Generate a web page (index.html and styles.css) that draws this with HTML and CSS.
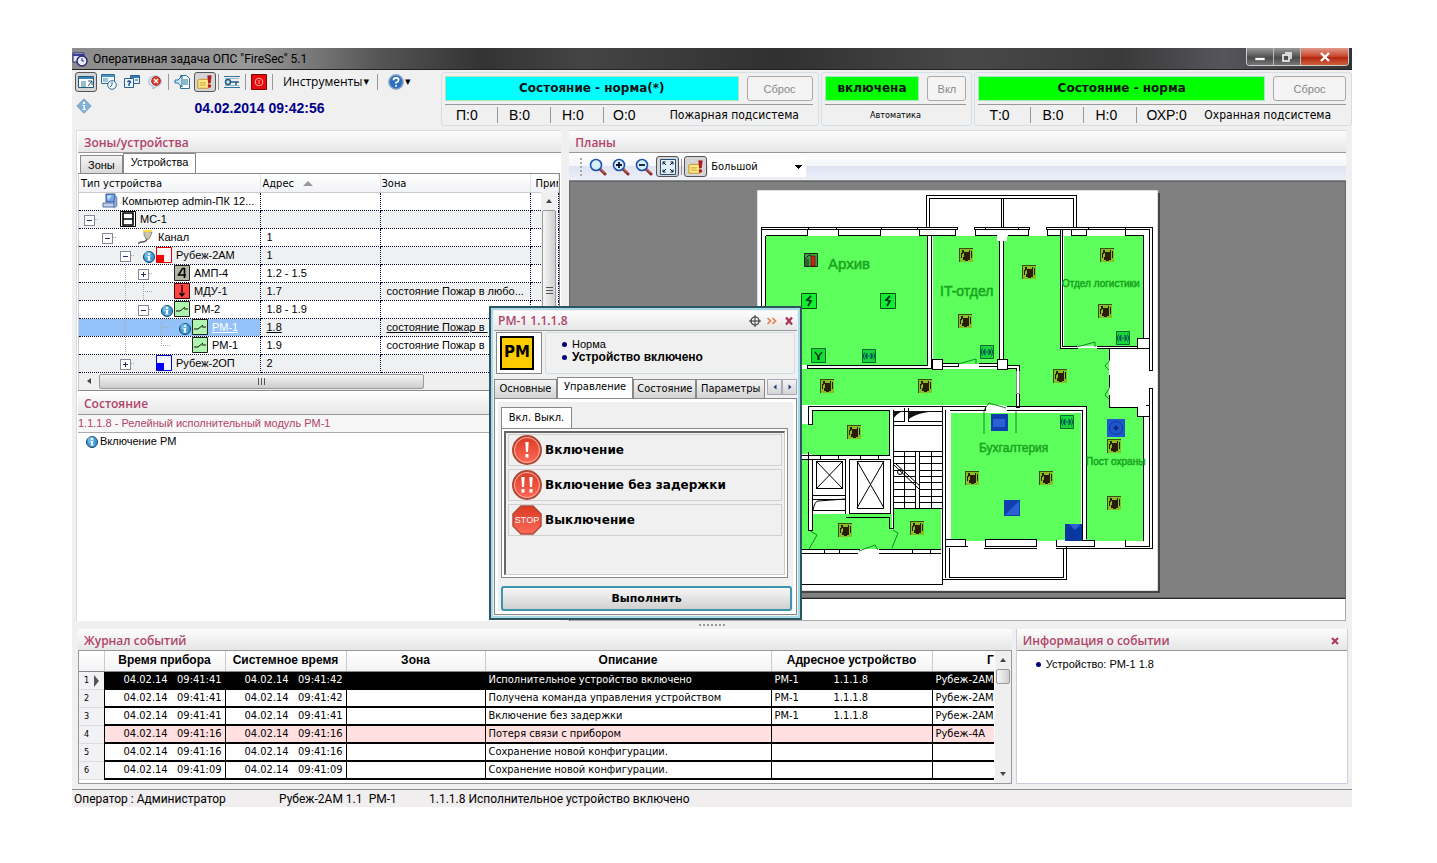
FILE: index.html
```html
<!DOCTYPE html>
<html lang="ru">
<head>
<meta charset="utf-8">
<title>Оперативная задача ОПС "FireSec" 5.1</title>
<link rel="stylesheet" href="styles.css">
</head>
<body>
<svg class="defs" aria-hidden="true">
  <defs>
    <linearGradient id="gRed" x1="0" y1="0" x2="0" y2="1"><stop offset="0" stop-color="#d93a22"/><stop offset="1" stop-color="#ff6a5a"/></linearGradient>
    <symbol id="info" viewBox="0 0 12 12"><circle cx="6" cy="6" r="5.5" fill="#3f9bd6" stroke="#14466e"/><circle cx="5" cy="4" r="3.4" fill="#8fd0f2" opacity=".6"/><path d="M5 2.3h2v1.6H5zM4.6 5h2.3v3.6h.8v1H4.3v-1h.8V6h-.5z" fill="#fff"/></symbol>
    <symbol id="relay" viewBox="0 0 16 16"><path d="M.5.5h15v15H.5z" fill="#aef5ae" stroke="#222"/><path d="M2 10h4l5-4M10 8h4" fill="none" stroke="#111"/></symbol>
    <symbol id="note" viewBox="0 0 18 16"><path d="M1 6l2-1h10v10H1z" fill="#ffe98a" stroke="#c08a1c"/><path d="M3 9h7M3 11.500h7" stroke="#c9962e"/><path d="M12 1h4l-1 8h-2z" fill="#c4161c" stroke="#7d0b0e" stroke-width=".6"/><circle cx="14" cy="12.500" r="2" fill="#c4161c"/></symbol>
    <symbol id="lens" viewBox="0 0 18 18"><path d="M11 11l5 5" stroke="#8c2f2c" stroke-width="3" stroke-linecap="round"/><path d="M11.500 10.800l4 4" stroke="#d98a80" stroke-width="1"/><circle cx="7" cy="7" r="5.500" fill="#d6f1fb" stroke="#1d4fae" stroke-width="1.600"/></symbol>
    <symbol id="det" viewBox="0 0 14 14"><path d="M0 0h14v14H0z" fill="#86bf22"/><path d="M0 0h14v1H1v13H0z" fill="#3a4a10"/><path d="M5 4h5v5h1v3H9v1H6v-1H4V9h1zM2 5h2v1H3v4H2zM3 2h2v3H3zM10 2h1v7h-1zM12 3h1v7h-1z" fill="#2a1c08"/></symbol>
    <symbol id="spk" viewBox="0 0 14 14"><path d="M.5.5h13v13H.5z" fill="#18d63a" stroke="#063"/><path d="M5 4v6L3 7zM9 4v6l2-3zM6 7h2" fill="#0a5b5b" stroke="#0a5b5b"/><path d="M2.500 3.500Q0 7 2.500 10.500M11.500 3.500Q14 7 11.500 10.500" fill="none" stroke="#0a5b3b"/></symbol>
    <symbol id="bolt" viewBox="0 0 16 16"><path d="M.5.5h15v15H.5z" fill="#10f030" stroke="#064d10"/><path d="M10 3L6 7l4 1-3 5" fill="none" stroke="#032" stroke-width="1.800"/></symbol>
  </defs>
</svg>

<div class="app">
  <header class="titlebar">
    <svg class="i16" viewBox="0 0 16 16"><path d="M1 2h11v9H1z" fill="#dfe2f8" stroke="#2c2c70"/><path d="M1 4h11" stroke="#3d3da0" stroke-width="2"/><circle cx="10" cy="10" r="5" fill="#e9edff" stroke="#25256b" stroke-width="1.400"/><path d="M10 7v3h2" fill="none" stroke="#25256b"/></svg>
    <h1>Оперативная задача ОПС "FireSec" 5.1</h1>
    <div class="winbtns">
      <button aria-label="Свернуть"><svg viewBox="0 0 12 10"><path d="M1 5.500h10v3H1z" fill="#fff" stroke="#444" stroke-width=".6"/></svg></button>
      <button aria-label="Развернуть"><svg viewBox="0 0 12 10"><path d="M4 1h6v6M2 3h6v6H2z" fill="none" stroke="#fff" stroke-width="1.500"/></svg></button>
      <button class="close" aria-label="Закрыть"><svg viewBox="0 0 12 10"><path d="M2 1l8 8M10 1L2 9" stroke="#fff" stroke-width="2.400"/></svg></button>
    </div>
  </header>

  <div class="top">
    <div class="tools">
      <div class="toolrow">
        <button class="tb on" aria-label="Окно"><svg viewBox="0 0 16 16"><path d="M.5 2.500h15v11H.5z" fill="#fff" stroke="#24587c"/><path d="M1 4h14" stroke="#3b86b8" stroke-width="2"/><path d="M3 8h5M3 10h5M3 12h5" stroke="#2f7d8c"/><path d="M10 7h4v4M14 7l-4 5" fill="none" stroke="#24587c"/></svg></button>
        <button class="tb" aria-label="Журнал"><svg viewBox="0 0 16 16"><path d="M.5.500h13v9H.5z" fill="#eef8ff" stroke="#2d6b93"/><path d="M1 2h12" stroke="#4a93c2" stroke-width="2"/><path d="M2 5h5M2 7h5" stroke="#4a93a2"/><circle cx="11" cy="11" r="4.300" fill="#f4fbff" stroke="#2d6b93"/><path d="M11 8v3l-2 2" fill="none" stroke="#2d6b93"/></svg></button>
        <button class="tb" aria-label="Запрос"><svg viewBox="0 0 16 16"><path d="M6.500 1.500h9v8h-9z" fill="#e1f2fc" stroke="#2a5f8f"/><path d="M7 3h8" stroke="#3979b4" stroke-width="2"/><path d="M.5 4.500h9v9h-9z" fill="#eaf6ff" stroke="#2a5f8f"/><path d="M3.500 8q1.500-2 3 0L5 10v2" fill="none" stroke="#1a3f80" stroke-width="1.300"/><path d="M11 6h3" stroke="#2a5f8f"/></svg></button>
        <button class="tb" aria-label="Сообщение"><svg viewBox="0 0 16 16"><path d="M8 2c8 0 8 10 2 10l-4 3v-3C0 12 0 2 8 2z" fill="#dce6f5" stroke="#9db4d6"/><circle cx="9" cy="7" r="4.300" fill="#e2432a" stroke="#a82413"/><path d="M7 5l4 4M11 5L7 9" stroke="#fff" stroke-width="1.300"/></svg></button>
        <i class="sep"></i>
        <button class="tb" aria-label="Звук"><svg viewBox="0 0 16 16"><path d="M6.500 1.500h6l3 3v10h-9z" fill="#f3fbff" stroke="#2d7199"/><path d="M9 6h5M9 8h5M9 10h5" stroke="#2d7199"/><path d="M1 6h3l4-4v11l-4-4H1z" fill="#c3e7f7" stroke="#2d7199"/></svg></button>
        <button class="tb on" aria-label="Тревоги"><svg viewBox="0 0 18 16"><use href="#note"/></svg></button>
        <i class="sep"></i>
        <button class="tb" aria-label="Ключ"><svg viewBox="0 0 16 16"><path d="M0 2.500h16M0 13.500h16" stroke="#36729c"/><path d="M1 4.500h14M1 11.500h14" stroke="#8fb8d0"/><circle cx="4" cy="8" r="2.500" fill="#d2e8f6" stroke="#245b86" stroke-width="1.500"/><path d="M7 8h8M12 8v3" stroke="#245b86" stroke-width="1.500"/></svg></button>
        <i class="sep"></i>
        <button class="tb" aria-label="Стоп"><svg viewBox="0 0 16 16"><path d="M.5.500h15v15H.5z" fill="#e80c0c" stroke="#7d0606"/><circle cx="8" cy="8" r="3.800" fill="none" stroke="#ffb0a8"/><path d="M8 6v4" stroke="#ffb0a8"/></svg></button>
        <i class="sep"></i>
        <button class="menu">Инструменты <small>▾</small></button>
        <i class="sep"></i>
        <button class="menu" aria-label="Справка"><svg class="i16" viewBox="0 0 16 16"><circle cx="8" cy="8" r="7.200" fill="#2f6fc0" stroke="#8ea6c8" stroke-width="1.500"/><path d="M5.500 6.200q0-2.400 2.600-2.400 2.500 0 2.500 2T8 8.500v1.300M8 11v1.700" fill="none" stroke="#fff" stroke-width="1.700"/></svg><small>▾</small></button>
      </div>
      <div class="clockrow">
        <svg class="i16" viewBox="0 0 16 16"><path d="M8 .8L15.200 8 8 15.200.8 8z" fill="#7fb2dc" stroke="#7f9cb8"/><path d="M7 4h2v2H7zM6.500 7H9v4h1v1H6.500v-1h1V8h-1z" fill="#fff"/></svg>
        <time>04.02.2014 09:42:56</time>
      </div>
    </div>
    <section class="sys fire">
      <div class="sysrow"><strong class="state cyan">Состояние - норма(*)</strong><button class="wide" disabled>Сброс</button></div>
      <div class="counts"><span>П:0</span><span>В:0</span><span>Н:0</span><span>О:0</span><b>Пожарная подсистема</b></div>
    </section>
    <section class="sys auto">
      <div class="sysrow"><strong class="state">включена</strong><button disabled>Вкл</button></div>
      <div class="counts small">Автоматика</div>
    </section>
    <section class="sys guard">
      <div class="sysrow"><strong class="state">Состояние - норма</strong><button class="wide" disabled>Сброс</button></div>
      <div class="counts"><span>Т:0</span><span>В:0</span><span>Н:0</span><span>ОХР:0</span><b>Охранная подсистема</b></div>
    </section>
  </div>

  <main class="main">
    <div class="left">
      <h2 class="head">Зоны/устройства</h2>
      <div class="tabs"><button>Зоны</button><button class="active">Устройства</button></div>
      <div class="treebox">
        <table class="tree">
          <colgroup><col class="c1"><col class="c2"><col class="c3"><col></colgroup>
          <thead><tr><th>Тип устройства</th><th>Адрес <svg class="sort" viewBox="0 0 10 5"><path d="M5 0l5 5H0z" fill="#999"/></svg></th><th>Зона</th><th>Примечание</th></tr></thead>
          <tbody>
            <tr><td><div class="node"><i class="slot"></i><svg viewBox="0 0 16 16"><path d="M4 1h9l-1 8H4z" fill="#6fa4e8" stroke="#2a4f96"/><path d="M5 2.500h5l-4 5z" fill="#c9e0fb"/><path d="M1 10h11v4H1z" fill="#c5d3ea" stroke="#4f6ea6"/><path d="M13 3l2 1v9l-3 2v-5z" fill="#8fa9d4" stroke="#4f6ea6" stroke-width=".6"/></svg>Компьютер admin-ПК 12...</div></td><td></td><td></td><td></td></tr>
            <tr><td><div class="node"><i class="g box"></i><i class="slot"></i><svg viewBox="0 0 16 16"><path d="M.5.500h15v15H.5z" fill="#fff" stroke="#000"/><path d="M3 2h10v12H3zM3 8h10" fill="none" stroke="#000" stroke-width="1.600"/></svg>МС-1</div></td><td></td><td></td><td></td></tr>
            <tr><td><div class="node"><i class="g"></i><i class="g box"></i><i class="slot"></i><svg viewBox="0 0 16 16"><path d="M6 2l8 1-1 3-2 4H8L6 6z" fill="#c9c4b4" stroke="#7d786c" stroke-width=".8"/><path d="M5 1h9v2H5z" fill="#ffd94a"/><path d="M9 10q-1 3-5 3t-3 2" fill="none" stroke="#555" stroke-width="1.400"/></svg>Канал</div></td><td>1</td><td></td><td></td></tr>
            <tr><td><div class="node"><i class="g"></i><i class="g"></i><i class="g box"></i><i class="slot"><svg class="i12" viewBox="0 0 12 12"><use href="#info"/></svg></i><svg viewBox="0 0 16 16"><path d="M.5.500h15v15H.5z" fill="#fff5f5" stroke="#d00"/><path d="M1 8h7v7H1z" fill="#f00"/></svg>Рубеж-2АМ</div></td><td>1</td><td></td><td></td></tr>
            <tr><td><div class="node"><i class="g"></i><i class="g"></i><i class="g v"></i><i class="g box plus"></i><i class="slot"></i><svg viewBox="0 0 16 16"><path d="M.5.500h15v15H.5z" fill="#b5b5a5" stroke="#222"/><path d="M10.500 13V3.500h-2L4.500 10H12" fill="none" stroke="#000" stroke-width="1.600"/></svg>АМП-4</div></td><td>1.2 - 1.5</td><td></td><td></td></tr>
            <tr><td><div class="node"><i class="g"></i><i class="g"></i><i class="g v"></i><i class="g v h"></i><i class="slot"></i><svg viewBox="0 0 16 16"><path d="M.5.500h15v15H.5z" fill="#f44" stroke="#400"/><path d="M8 2v11M5.500 10L8 13l2.500-3" fill="none" stroke="#000" stroke-width="1.200"/></svg>МДУ-1</div></td><td>1.7</td><td>состояние Пожар в любо...</td><td></td></tr>
            <tr><td><div class="node"><i class="g"></i><i class="g"></i><i class="g v"></i><i class="g box"></i><i class="slot"><svg class="i12" viewBox="0 0 12 12"><use href="#info"/></svg></i><svg viewBox="0 0 16 16"><use href="#relay"/></svg>РМ-2</div></td><td>1.8 - 1.9</td><td></td><td></td></tr>
            <tr class="sel"><td><div class="node"><i class="g"></i><i class="g"></i><i class="g v"></i><i class="g"></i><i class="g v h"></i><i class="slot"><svg class="i12" viewBox="0 0 12 12"><use href="#info"/></svg></i><svg viewBox="0 0 16 16"><use href="#relay"/></svg><u>РМ-1</u></div></td><td><u>1.8</u></td><td><u>состояние Пожар в&nbsp;</u></td><td></td></tr>
            <tr><td><div class="node"><i class="g"></i><i class="g"></i><i class="g v"></i><i class="g"></i><i class="g end h"></i><i class="slot"></i><svg viewBox="0 0 16 16"><use href="#relay"/></svg>РМ-1</div></td><td>1.9</td><td>состояние Пожар в</td><td></td></tr>
            <tr><td><div class="node"><i class="g"></i><i class="g"></i><i class="g box plus"></i><i class="slot"></i><svg viewBox="0 0 16 16"><path d="M.5.500h15v15H.5z" fill="#f5f5ff" stroke="#00c"/><path d="M1 8h7v7H1z" fill="#00f"/></svg>Рубеж-2ОП</div></td><td>2</td><td></td><td></td></tr>
          </tbody>
        </table>
        <div class="vbar treev"><svg viewBox="0 0 8 8"><path d="M4 2l3 4H1z" fill="#444"/></svg><div class="vthumb"><b></b></div></div>
        <div class="hbar"><svg viewBox="0 0 8 8"><path d="M2 4l4-3v6z" fill="#444"/></svg><div class="hthumb"><b></b></div></div>
      </div>
      <h2 class="head second">Состояние</h2>
      <p class="sub">1.1.1.8 - Релейный исполнительный модуль РМ-1</p>
      <p class="line"><svg class="i12" viewBox="0 0 12 12"><use href="#info"/></svg>Включение РМ</p>
    </div>

    <div class="right">
      <h2 class="head">Планы</h2>
      <div class="planbar">
        <i class="grip"></i>
        <button class="tb" aria-label="Лупа"><svg viewBox="0 0 18 18"><use href="#lens"/></svg></button>
        <button class="tb" aria-label="Увеличить"><svg viewBox="0 0 18 18"><use href="#lens"/><path d="M4 7h6M7 4v6" stroke="#113" stroke-width="1.800"/></svg></button>
        <button class="tb" aria-label="Уменьшить"><svg viewBox="0 0 18 18"><use href="#lens"/><path d="M4 7h6" stroke="#113" stroke-width="1.800"/></svg></button>
        <button class="tb on" aria-label="Вписать"><svg viewBox="0 0 16 16"><path d="M.5.500h15v15H.5z" fill="#dff0fb" stroke="#245078"/><path d="M6 6L3 3M10 6l3-3M6 10l-3 3M10 10l3 3M3 5.500V3h2.500M10.500 3H13v2.500M3 10.500V13h2.500M10.500 13H13v-2.500" fill="none" stroke="#111"/></svg></button>
        <i class="sep"></i>
        <button class="tb on" aria-label="Тревоги на плане"><svg viewBox="0 0 18 16"><use href="#note"/></svg></button>
        <select aria-label="План"><option>Большой</option></select>
      </div>
      <div class="canvas">
        <svg class="plan" viewBox="757 190 403 403">
          <path d="M760 193h400v400H760z" fill="#444"/>
          <path d="M757.500 190.500h400v400h-400z" fill="#fff" stroke="#ddd"/>
          <g fill="#5cff5c" shape-rendering="crispEdges">
            <path d="M766 236h162v129H766zM933 236h67v128h-67zM1004 236h57v130h-57zM1064 236h79v110h-79zM766 369h253v36H766zM1004 348h105v58h-105zM1086 405h57v136h-57zM951 413h130v128H951zM812 411h77v44h-77zM800 424h14v30h-14zM812 514h80v35h-80zM800 460h8v89h-8zM893 509h48v40h-48zM888 528h6v21h-6zM806 530h8v19h-8z"/>
          </g>
          <g fill="none" stroke="#000" shape-rendering="crispEdges">
            <path d="M926.500 227v-31.500h150V227M929.500 227v-28.500h144V227M1001.500 198v29M1003.500 198v29"/>
            <path d="M761.500 227.500h196v2h-196zM808.500 227v2M836.500 227v2M881.500 227v2M917.500 227v2M974.500 227.500h55v2h-55zM985.500 227v2M1018.500 227v2M1046.500 227.500H1152.500V370.500h-3V229.500h-103zM1088.500 227v2M1125.500 227v2"/>
            <path d="M761.500 229v175M765.500 404V235.500M765.500 235.500h42v-6M838.500 229v6.500h42v-6M919.500 229v6.500h36v-6M975.500 229v6.500h22M1008 235.500h20v-6M1047.500 229v6.500h13M1071.500 229v6.500h15v-6M1125.500 229v6.500h18V338"/>
            <path d="M927.500 236v129.500H807.500v3H931.500V236M999.500 241v118M1003.500 241v118M1060.500 230v118.500h17M1062.500 230v116.500h14M1096.500 346.500h41M1096.500 348.500h41M943 363.500h15v3h-15M979 363.500h18M979 366.500h18"/>
            <path d="M932.500 359.500h10v10h-10zM1137.500 338.500h12v10h-12zM1137.500 405.500h12v11h-12zM997.500 359.500h10v10h-10zM1007 365.500h12.500v6h-3V368H1007M1016.500 393.500h3v14h-3z" fill="#fff"/>
            <path d="M1109.500 348.500h36v59h-36z" fill="#fff" stroke="none"/><path d="M1016.500 371v22h3v-22" fill="#fff" stroke="#888"/><path d="M997 230h10v11h-10z" fill="#fff" stroke="none"/><path d="M1109.500 348v12M1109.500 375v12M1109.500 395v12.500h28M1152.500 388.500h-3v19M1152.500 388v160M1149.500 416v130M1143.500 416v124.500M1125.500 540v6.500h24M1125 548.500h27.500"/>
            <path d="M808 406.500h178M812 410.500h77M808.500 406v18h4v-13M893.500 410V509M889.500 410v45M942.500 406v173M945.500 410v168M949.500 410.500h36v-4M1007 406.500h79.500V539M1007 410.500h75.500V539.500M951 539.500h15M951 546.500h17"/>
            <path d="M800 455.500h89.500M800 459.500h12M820 455v4M838 455v4M860 455v4M878 455v4M808.500 452v78h4V459.500h33v54M849.500 459.500h41V513.500h-41zM812 495.500h33M812 499.500h33M845.500 517.500h44v11h4v-20"/>
            <path d="M816.500 461.500h26v27h-26zM857.500 461.500h26v47h-26zM812 510.500h33"/>
            <path d="M893.500 411.500h49M893.500 421.500h11v-14M908.500 408v13.500h34M893 425.500h49M893 451.500h49M893 456.500h49M893 463.500h49M893 470.500h49M893 476.500h49M893 482.500h49M893 489.500h49M893 496.500h49M893 502.500h49M893 508.500h49M904.500 451v57M931.500 451v57"/>
            <path d="M915.500 451.500h4v57h-4z" fill="#fff"/>
            <path d="M800 549.500h60M800 553.500h58M824.500 549v4M839.500 549v4M879 549.500h62M879 553.500h62M912.500 549v4M930.500 549v4M942.500 553v31.500H800M942 579.500h124V547M949.500 548v29.500h114V548"/>
            <path d="M945.500 539.500h20v7h-20M985.500 539.500h51v7h-51zM1056.500 540v6.500h38v-6.500h-13M1056 548.500h70M984 548.500h53" fill="#fff"/>
          </g>
          <g fill="none" stroke="#000" stroke-width="1">
            <path d="M816 461l27 28M843 461l-27 28M857 461l27 47M884 461l-27 47M813 510q2-9 5-9l27-2M893 464l26 25M896 464l24 22"/><circle cx="900" cy="472" r="2.500"/>
            <path d="M893 411h11q-8 2-11 9zM908 420v-9h32q-24 1-32 9z" fill="#111" stroke="none"/>
          </g>
          <g fill="none" stroke="#158a25">
            <path d="M1077 347l18-5v5M958 364l18-5v5M984 410l5-7 17 5M984 411v23M1016 411v22M1110 360l-5 6 4 4M1110 387l-5 8 4 4M810 531l7 4-8 14M859 551l16-6 3 5M893 530l5 3-6 15"/>
          </g>
          <g class="rooms">
            <text x="828" y="269" font-size="15">Архив</text>
            <text x="940" y="296" font-size="14">IT-отдел</text>
            <text x="1062" y="287" font-size="10">Отдел логистики</text>
            <text x="979" y="452" font-size="12">Бухгалтерия</text>
            <text x="1086" y="465" font-size="10">Пост охраны</text>
          </g>
          <g>
            <use href="#det" x="959" y="248" width="14" height="14"/><use href="#det" x="958" y="314" width="14" height="14"/>
            <use href="#det" x="1022" y="265" width="14" height="14"/><use href="#det" x="1100" y="248" width="14" height="14"/>
            <use href="#det" x="1098" y="304" width="14" height="14"/><use href="#det" x="1053" y="369" width="14" height="14"/>
            <use href="#det" x="820" y="379" width="14" height="14"/><use href="#det" x="918" y="379" width="14" height="14"/>
            <use href="#det" x="847" y="425" width="14" height="14"/><use href="#det" x="965" y="471" width="14" height="14"/>
            <use href="#det" x="1039" y="471" width="14" height="14"/><use href="#det" x="1107" y="439" width="14" height="14"/>
            <use href="#det" x="1107" y="496" width="14" height="14"/><use href="#det" x="838" y="523" width="14" height="14"/>
            <use href="#det" x="910" y="521" width="14" height="14"/>
            <use href="#spk" x="862" y="349" width="14" height="14"/><use href="#spk" x="980" y="345" width="14" height="14"/>
            <use href="#spk" x="1116" y="331" width="14" height="14"/><use href="#spk" x="1060" y="415" width="14" height="14"/>
            <use href="#bolt" x="801" y="293" width="16" height="16"/><use href="#bolt" x="880" y="293" width="16" height="16"/>
            <path d="M811.500 348.500h14v14h-14z" fill="#14dd30" stroke="#063"/><path d="M815 352l3 4v4M822 352l-3 4v4" fill="none" stroke="#032" stroke-width="1.300"/>
            <path d="M804.500 253.500h13v13h-13z" fill="#2fa83a" stroke="#222"/><path d="M811 256h4v10h-4z" fill="#d31f1f" stroke="#500" stroke-width=".6"/><path d="M806 266v-8q2-3 5-3M808 266v-7" fill="none" stroke="#222"/>
            <path d="M991 414h17v17h-17z" fill="#0f3fae"/><path d="M993 419h12v8h-12z" fill="#2a62d6"/>
            <path d="M1107 419h18v18h-18z" fill="#1e56cc"/><circle cx="1116" cy="428" r="6.500" fill="none" stroke="#0c3aa0"/><path d="M1116 425l3 3-3 3-3-3z" fill="#0c3080"/>
            <path d="M1004 500h16v16h-16z" fill="#0f3fae"/><path d="M1019 501v14h-14z" fill="#2a62d6"/>
            <path d="M1065 524h17v17h-17z" fill="#0a36a0"/><path d="M1069 524h12l-6 6z" fill="#2a62d6"/>
          </g>
        </svg>
      </div>
      <div class="under"></div>
    </div>
  </main>

  <div class="splitter"><i></i></div>

  <div class="bottom">
    <section class="journal">
      <h2 class="head">Журнал событий</h2>
      <div class="jbox">
        <table class="log">
          <colgroup><col class="j0"><col class="j1"><col class="j1"><col class="j3"><col class="j4"><col class="j5"><col></colgroup>
          <thead><tr><th></th><th>Время прибора</th><th>Системное время</th><th>Зона</th><th>Описание</th><th>Адресное устройство</th><th class="r">Г</th></tr></thead>
          <tbody>
            <tr class="cur"><td>1<svg viewBox="0 0 6 12"><path d="M0 0l5 6-5 6z" fill="#555"/></svg></td><td class="r">04.02.14&nbsp;&nbsp;&nbsp;09:41:41</td><td class="r">04.02.14&nbsp;&nbsp;&nbsp;09:41:42</td><td></td><td>Исполнительное устройство включено</td><td><span class="pm">РМ-1</span>1.1.1.8</td><td>Рубеж-2АМ</td></tr>
            <tr><td>2</td><td class="r">04.02.14&nbsp;&nbsp;&nbsp;09:41:41</td><td class="r">04.02.14&nbsp;&nbsp;&nbsp;09:41:42</td><td></td><td>Получена команда управления устройством</td><td><span class="pm">РМ-1</span>1.1.1.8</td><td>Рубеж-2АМ</td></tr>
            <tr><td>3</td><td class="r">04.02.14&nbsp;&nbsp;&nbsp;09:41:41</td><td class="r">04.02.14&nbsp;&nbsp;&nbsp;09:41:41</td><td></td><td>Включение без задержки</td><td><span class="pm">РМ-1</span>1.1.1.8</td><td>Рубеж-2АМ</td></tr>
            <tr class="lost"><td>4</td><td class="r">04.02.14&nbsp;&nbsp;&nbsp;09:41:16</td><td class="r">04.02.14&nbsp;&nbsp;&nbsp;09:41:16</td><td></td><td>Потеря связи с прибором</td><td></td><td>Рубеж-4А</td></tr>
            <tr><td>5</td><td class="r">04.02.14&nbsp;&nbsp;&nbsp;09:41:16</td><td class="r">04.02.14&nbsp;&nbsp;&nbsp;09:41:16</td><td></td><td>Сохранение новой конфигурации.</td><td></td><td></td></tr>
            <tr><td>6</td><td class="r">04.02.14&nbsp;&nbsp;&nbsp;09:41:09</td><td class="r">04.02.14&nbsp;&nbsp;&nbsp;09:41:09</td><td></td><td>Сохранение новой конфигурации.</td><td></td><td></td></tr>
          </tbody>
        </table>
        <div class="vbar"><svg viewBox="0 0 8 8"><path d="M4 2l3 4H1z" fill="#444"/></svg><div class="vthumb short"></div><svg class="dn" viewBox="0 0 8 8"><path d="M1 2h6L4 6z" fill="#444"/></svg></div>
      </div>
    </section>
    <section class="event">
      <h2 class="head">Информация о событии <button aria-label="Закрыть"><svg viewBox="0 0 8 8"><path d="M1 1l6 6M7 1L1 7" stroke="#b0365a" stroke-width="2"/></svg></button></h2>
      <ul class="dots"><li>Устройство: РМ-1 1.8</li></ul>
    </section>
  </div>

  <footer class="status"><span class="op">Оператор : Администратор</span><span class="dev">Рубеж-2АМ 1.1&ensp;РМ-1</span><span>1.1.1.8 Исполнительное устройство включено</span></footer>

  <div class="dialog" role="dialog" aria-label="РМ-1 1.1.1.8">
    <h2 class="head">РМ-1 1.1.1.8
      <span class="dicons">
        <svg viewBox="0 0 12 12"><circle cx="6" cy="6" r="4" fill="none" stroke="#333" stroke-width="1.200"/><path d="M6 0v12M0 6h12" stroke="#333"/></svg>
        <svg viewBox="0 0 12 12"><path d="M1.500 3l3 3-3 3M6.500 3l3 3-3 3" fill="none" stroke="#f07a4a" stroke-width="1.700"/></svg>
        <svg viewBox="0 0 12 12"><path d="M3 2.500l6 7M9 2.500l-6 7" stroke="#a82f55" stroke-width="2.200"/></svg>
      </span>
    </h2>
    <div class="summary">
      <div class="pmbox"><div class="pmicon">РМ</div></div>
      <ul class="dots"><li>Норма</li><li><b>Устройство включено</b></li></ul>
    </div>
    <div class="dtabs"><button>Основные</button><button class="active">Управление</button><button>Состояние</button><button>Параметры</button><button class="arr" aria-label="Назад"><svg viewBox="0 0 8 8"><path d="M5.500 1.500v5L2.500 4z" fill="#24368c"/></svg></button><button class="arr" aria-label="Вперёд"><svg viewBox="0 0 8 8"><path d="M2.500 1.500v5l3-2.500z" fill="#24368c"/></svg></button></div>
    <div class="dbody">
      <button class="subtab">Вкл. Выкл.</button>
      <div class="pane"><div class="list">
        <button class="cmd"><svg viewBox="0 0 30 30"><circle cx="15" cy="15" r="14" fill="url(#gRed)" stroke="#b04a38" stroke-width="2"/><circle cx="15" cy="15" r="12.500" fill="none" stroke="#ffb3a6"/><path d="M13.300 7h3.400l-.7 10h-2zM13.500 19h3v3.500h-3z" fill="#fff"/></svg>Включение</button>
        <button class="cmd"><svg viewBox="0 0 30 30"><circle cx="15" cy="15" r="14" fill="url(#gRed)" stroke="#b04a38" stroke-width="2"/><circle cx="15" cy="15" r="12.500" fill="none" stroke="#ffb3a6"/><path d="M9.300 7h3.400L12 17h-2zM9.500 19h3v3.500h-3zM17.300 7h3.400l-.7 10h-2zM17.500 19h3v3.500h-3z" fill="#fff"/></svg>Включение без задержки</button>
        <button class="cmd"><svg viewBox="0 0 30 30"><path d="M9 1h12l8 8v12l-8 8H9l-8-8V9z" fill="url(#gRed)" stroke="#b04a38" stroke-width="1.500"/><text x="15" y="18" font-size="9" text-anchor="middle" fill="#fff" class="stop">STOP</text></svg>Выключение</button>
      </div></div>
      <button class="run">Выполнить</button>
    </div>
  </div>
</div>
</body>
</html>
```
FILE: styles.css
```css
* { box-sizing: border-box; }
body {
  margin: 0;
  min-height: 100vh;
  padding: 48px 85px 56px 72px;
  display: flex;
  background: #fff;
  color: #000;
  font: 11px/14px "DejaVu Sans Condensed", "DejaVu Sans", sans-serif;
}
h1, h2, p, ul { margin: 0; padding: 0; }
button { font: inherit; color: inherit; padding: 0; background: none; border: 0; }
i { font-style: normal; display: block; }
svg { flex: none; display: block; }
.defs { position: absolute; width: 0; height: 0; }
.i16 { width: 16px; height: 16px; }
.i12 { width: 12px; height: 12px; }

.app { position: relative; flex: 1; min-width: 0; display: flex; flex-direction: column; background: #f0f0f0; }

.titlebar {
  height: 22px; display: flex; align-items: center; gap: 5px; overflow: hidden;
  background: linear-gradient(90deg, #8c8c8c, #989898 14%, #555 24%, #333 32%, #444 40%, #303030 55%, #484848 70%, #3a3a3a 82%, #55555c 90%, #333);
  border-bottom: 1px solid #222;
}
.titlebar h1 { font: 12px/20px Roboto, "Noto Sans", sans-serif; }
.winbtns { margin-left: auto; margin-right: 3px; align-self: flex-start; display: flex; height: 18px; border: 1px solid #ccc; border-top: 0; border-radius: 0 0 4px 4px; overflow: hidden; }
.winbtns button { width: 27px; display: grid; place-items: center; background: linear-gradient(#9a9a9a, #555 50%, #444 50%, #777); border-right: 1px solid #bbb; }
.winbtns .close { width: 47px; border: 0; background: linear-gradient(#e09a88, #c8452c 50%, #b0200c 50%, #d0603c); }
.winbtns svg { width: 12px; height: 10px; }

.top { display: flex; align-items: flex-start; gap: 2px; height: 60px; padding-top: 2px; }
.tools { flex: none; width: 367px; }
.toolrow { display: flex; align-items: center; height: 20px; gap: 1px; padding-left: 3px; }
.tb { width: 22px; height: 20px; display: grid; place-items: center; }
.tb svg { width: 16px; height: 16px; }
.tb.on { border: 1px solid #555; border-radius: 3px; background: #d5d5d8; }
.sep { width: 1px; height: 16px; background: #999; margin: 0 1px; flex: none; }
.menu { display: flex; align-items: center; font: 12px/18px "Open Sans", "Noto Sans", sans-serif; padding: 0 6px 0 8px; white-space: nowrap; }
.menu small { font: 11px/12px "DejaVu Sans", sans-serif; margin-left: 1px; }
.clockrow { display: flex; align-items: center; padding: 0 12px 4px 4px; height: 32px; }
.clockrow time { flex: 1; padding-top: 4px; text-align: center; font: bold 14px/18px "Liberation Sans", Arial, sans-serif; color: #00008a; }

.sys { border: 1px solid #d3dee6; border-radius: 3px; padding: 3px 5px 0 3px; display: flex; flex-direction: column; background: #f0f0f0; min-width: 0; }
.fire { flex: 381; } .auto { flex: 147; } .guard { flex: 381; }
.sysrow { display: flex; gap: 8px; height: 26px; padding-bottom: 1px; }
.sysrow .state { flex: 1; background: #0f0; border: 1px solid #a6e8c0; text-align: center; color: #111; font: bold 12px/23px "DejaVu Sans", sans-serif; white-space: nowrap; }
.sysrow .cyan { background: #0ff; }
.sysrow button { width: 39px; border: 1px solid #a9a9a9; border-radius: 3px; color: #888; background: #f4f4f4; font: 11px/20px "Liberation Sans", Arial, sans-serif; }
.sysrow .wide { width: 66px; } .guard .wide { width: 73px; }
.counts { display: flex; align-items: center; margin-top: 2px; border-top: 1px solid #999; height: 21px; }
.counts span { width: 53px; padding-left: 11px; font: 14px/16px "Liberation Sans", Arial, sans-serif; border-right: 1px solid #999; white-space: nowrap; }
.counts span:nth-child(4) { border: 0; width: 58px; padding-left: 9px; }
.counts b { flex: 1; padding-right: 6px; text-align: center; font: 12px/16px "DejaVu Sans Condensed", sans-serif; white-space: nowrap; }
.small { justify-content: center; font-size: 9px; }

.main { flex: 1; display: flex; gap: 8px; padding: 0 6px 0 4px; min-height: 0; }
.left { flex: 484; min-width: 0; background: #fff; border: 1px solid #d3dee6; border-width: 1px 0 0 1px; padding-left: 1px; }
.right { flex: 778; min-width: 0; display: flex; flex-direction: column; border-top: 1px solid #d3dee6; }
.head {
  display: flex; align-items: center; height: 22px; padding: 2px 8px 0 6px;
  font: 600 12px/18px "Open Sans", "Noto Sans", sans-serif; color: #b0446a;
  background: linear-gradient(#fdfdfd, #e6e6e6); border-bottom: 1px solid #999;
}
.tabs { display: flex; align-items: flex-end; height: 20px; padding-left: 2px; font: 11px/16px "Liberation Sans", Arial, sans-serif; }
.tabs button { height: 18px; padding: 0 7px; border: 1px solid #888; border-bottom: 0; background: linear-gradient(#f4f4f4, #d8d8d8); }
.tabs .active { height: 20px; background: #fff; padding-bottom: 3px; }
.treebox { position: relative; border: 1px solid #888; border-left-color: #ccc; margin-right: 1px; overflow: hidden; }
.tree { width: 100%; table-layout: fixed; border-collapse: collapse; font: 11px/16px "Liberation Sans", Arial, sans-serif; }
.c1 { width: 181px; } .c2 { width: 120px; } .c3 { width: 150px; }
.tree th { height: 18px; padding: 1px 0 0 2px; font: 11px/15px "DejaVu Sans Condensed", sans-serif; text-align: left; white-space: nowrap; overflow: hidden; border-right: 1px solid #e2e4ea; border-bottom: 1px solid #ccc; background: linear-gradient(#fff, #f1f2f6); }
.tree th:last-child { padding-left: 5px; }
.tree th:nth-child(3) { padding-left: 1px; }
.sort { display: inline-block; width: 10px; height: 5px; margin-left: 6px; vertical-align: middle; }
.tree td { height: 18px; padding: 0 0 0 6px; white-space: nowrap; overflow: hidden; border-bottom: 1px dotted #003; border-right: 1px dotted #003; }
.tree td:first-child { padding: 0 0 0 1px; }
.tree tr:nth-child(even) td { background: #eff0f2; }
.tree tr.sel td:first-child { background: #94c2f8; color: #fff; }
.node { display: flex; align-items: center; height: 17px; }
.node > svg { width: 16px; height: 16px; margin-right: 4px; }
.slot { width: 22px; flex: none; display: flex; justify-content: flex-end; padding: 4px 1px 0 0; }
.g { position: relative; width: 18px; height: 17px; flex: none; }
.v { background: linear-gradient(#aaa 50%, transparent 50%) 9px 0 / 1px 2px repeat-y; }
.h::after, .box::after { content: ""; position: absolute; left: 9px; top: 8px; width: 9px; border-top: 1px dotted #aaa; }
.end::before { content: ""; position: absolute; left: 9px; top: 0; height: 9px; border-left: 1px dotted #aaa; }
.box::before { content: ""; position: absolute; z-index: 1; left: 4px; top: 4px; width: 9px; height: 9px; border: 1px solid #889; background: linear-gradient(#236, #236) center / 5px 1px no-repeat #fff; }
.plus::before { background: linear-gradient(#236, #236) center / 5px 1px no-repeat, linear-gradient(#236, #236) center / 1px 5px no-repeat #fff; }

.vbar { width: 16px; flex: none; display: flex; flex-direction: column; align-items: center; background: #efefef; }
.vbar svg { width: 8px; height: 8px; margin: 5px 0; }
.vbar .dn { margin-top: auto; }
.vthumb { width: 14px; flex: 1; display: grid; place-items: center; border: 1px solid #999; border-radius: 2px; background: linear-gradient(90deg, #f7f7f7, #cfcfcf); }
.vthumb b { width: 7px; height: 8px; background: repeating-linear-gradient(#555 0 1px, transparent 1px 3px); }
.vthumb.short { flex: none; height: 15px; }
.treev { position: absolute; right: 2px; top: 18px; bottom: 17px; }
.hbar { height: 17px; display: flex; align-items: center; background: #efefef; padding: 1px 0; }
.hbar svg { width: 8px; height: 8px; margin: 0 6px; }
.hthumb { width: 325px; height: 15px; display: grid; place-items: center; border: 1px solid #999; border-radius: 2px; background: linear-gradient(#f4f4f4, #cdcdcd); }
.hthumb b { width: 8px; height: 7px; background: repeating-linear-gradient(90deg, #555 0 1px, transparent 1px 3px); }
.second { margin-top: 2px; height: 22px; }
.sub { font: 11px/17px "Liberation Sans", Arial, sans-serif; color: #b0446a; border-bottom: 1px solid #aaa; background: #f6f6f6; white-space: nowrap; }
.line { display: flex; align-items: center; gap: 2px; padding: 0 8px; font: 11px/16px "Liberation Sans", Arial, sans-serif; }
.line svg { margin-top: 2px; }

.planbar { display: flex; align-items: center; height: 28px; gap: 1px; padding-left: 11px; background: linear-gradient(#fff, #f4f5fa 50%, #dfe3f2 50%, #eef0f8); border-bottom: 1px solid #888; }
.planbar .tb svg { width: 18px; height: 18px; }
.planbar .tb.on { width: 23px; height: 21px; }
.planbar .tb.on svg { width: 16px; height: 16px; }
.grip { width: 2px; height: 18px; margin-right: 4px; background: repeating-linear-gradient(#aaa 0 2px, transparent 2px 4px); }
.planbar select { appearance: none; width: 98px; height: 21px; padding: 0 3px; border: 0; font: inherit; color: #000; background: linear-gradient(#000, #000) 87px 9px / 7px 1px no-repeat, linear-gradient(#000, #000) 88px 10px / 5px 1px no-repeat, linear-gradient(#000, #000) 89px 11px / 3px 1px no-repeat, linear-gradient(#000, #000) 90px 12px / 1px 1px no-repeat, #fff; }
.canvas { flex: 1; min-height: 0; display: flex; align-items: center; justify-content: center; padding: 3px 0 0 2px; background: #808080; border: 1px solid #666; }
.plan { width: 403px; height: 403px; }
.rooms text { font-family: "Liberation Sans", Arial, sans-serif; fill: #1aa51f; stroke: #1aa51f; stroke-width: .5; }
.under { height: 23px; background: #fff; border: 1px solid #222; border-color: #222 #aaa #aaa #222; }

.splitter { height: 8px; display: grid; place-items: center; }
.splitter i { width: 26px; height: 2px; background: repeating-linear-gradient(90deg, #999 0 2px, transparent 2px 4px); }

.bottom { display: flex; gap: 4px; padding: 0 4px 0 6px; }
.journal { flex: 936; min-width: 0; }
.event { flex: 331; min-width: 0; display: flex; flex-direction: column; background: #fff; border: 1px solid #ccd; border-top: 0; }
.event .head button { margin-left: auto; width: 8px; height: 8px; }
.event svg { width: 8px; height: 8px; }
.jbox { display: flex; height: 133px; overflow: hidden; background: #fff; border: 1px solid #999; border-top: 0; }
.log { flex: 1; min-width: 0; width: 0; table-layout: fixed; border-collapse: collapse; align-self: flex-start; margin-right: 1px; }
.j0 { width: 25px; } .j1 { width: 121px; } .j3 { width: 139px; } .j4 { width: 286px; } .j5 { width: 161px; }
.log th { height: 20px; padding: 0; font: bold 12px/17px "Liberation Sans", Arial, sans-serif; white-space: nowrap; overflow: hidden; border-right: 1px solid #ccc; border-bottom: 1px solid #888; background: linear-gradient(#fff, #f3f3f5); }
.log td { height: 18px; padding: 0 3px; line-height: 16px; white-space: nowrap; overflow: hidden; border-right: 1px solid #000; border-bottom: 2px solid #000; }
.log td:last-child, .log th:last-child { border-right: 0; padding-right: 0; }
.log td:first-child { font-size: 9px; background: #f2f2f4; border-bottom: 1px solid #ddd; padding-left: 5px; }
.log td svg { display: inline-block; width: 6px; height: 12px; margin-left: 5px; vertical-align: middle; }
.log .r { text-align: right; padding-right: 3px; }
.log .cur td:not(:first-child) { background: #000; color: #fff; }
.log .lost td:not(:first-child) { background: #ffdfdf; }
.pm { display: inline-block; width: 59px; }
.dots { list-style: none; font: 11px/13px "Liberation Sans", Arial, sans-serif; }
.dots li::before { content: ""; display: inline-block; width: 5px; height: 5px; border-radius: 50%; background: #00007a; margin-right: 5px; vertical-align: 1px; }
.event .dots { padding: 7px 19px; }

.status { display: flex; align-items: center; height: 18px; margin-top: 5px; padding-left: 2px; border-top: 1px solid #888; font: 12px/16px Roboto, "Noto Sans", sans-serif; background: #f0eeee; white-space: nowrap; }
.op { width: 205px; } .dev { width: 150px; }

.dialog { position: absolute; left: 417px; top: 258px; width: 313px; padding: 3px; background: #f0f0f0; border: 2px solid #2c5560; box-shadow: inset 0 0 0 2px #a8dbe8; font-size: 11px; }
.dialog .head { height: 20px; padding: 0 2px 0 4px; }
.dicons { margin-left: auto; display: flex; gap: 5px; }
.dicons svg { width: 12px; height: 12px; }
.summary { display: flex; gap: 3px; padding: 1px 2px 2px; }
.pmbox { padding: 3px; width: 46px; height: 42px; background: #fff; border: 1px solid #888; }
.pmicon { width: 34px; height: 34px; border: 2px solid #000; background: #fc0; text-align: center; font: bold 15px/28px "DejaVu Sans", sans-serif; }
.summary .dots { flex: 1; padding: 5px 16px; border: 1px solid #d0dce4; border-radius: 3px; }
.summary b { font: bold 12px/13px "Liberation Sans", Arial, sans-serif; }
.dtabs { display: flex; align-items: flex-end; height: 22px; white-space: nowrap; }
.dtabs button { height: 19px; flex: 62; border: 1px solid #888; border-bottom: 0; background: linear-gradient(#f4f4f4, #d4d4d4); }
.dtabs .active { height: 21px; flex: 76; background: #fff; padding-bottom: 3px; }
.dtabs button:nth-child(4) { flex: 68; margin-right: 2px; }
.dtabs .arr { flex: none; width: 15px; height: 16px; align-self: center; border: 1px solid #aab; display: grid; place-items: center; }
.arr svg { width: 8px; height: 8px; }
.dbody { border: 1px solid #888; box-shadow: inset 0 0 0 3px #fff; padding: 8px 4px 3px 6px; }
.subtab { display: block; position: relative; width: 71px; height: 21px; background: #fff; border: 1px solid #888; border-bottom: 0; }
.pane { margin-right: 4px; padding: 2px; background: #fff; border: 1px solid #888; }
.list { height: 144px; padding: 1px 2px 0; display: flex; flex-direction: column; gap: 3px; background: #f0f0f0; border: 1px solid #ccc; border-top: 2px solid #666; border-left: 2px solid #666; }
.cmd { display: flex; align-items: center; gap: 3px; height: 32px; padding-left: 3px; border: 1px solid #d0d0d0; font: bold 12px/16px "DejaVu Sans", sans-serif; text-align: left; }
.cmd svg { width: 30px; height: 30px; }
.stop { font-family: "Liberation Sans", Arial, sans-serif; font-weight: normal; }
.run { width: 100%; height: 25px; margin-top: 8px; border: 2px solid #3c94ae; border-radius: 3px; background: linear-gradient(#f6f6f6, #e4e4e4 50%, #d0d0d0); font: bold 11px/18px "DejaVu Sans", sans-serif; }
```
